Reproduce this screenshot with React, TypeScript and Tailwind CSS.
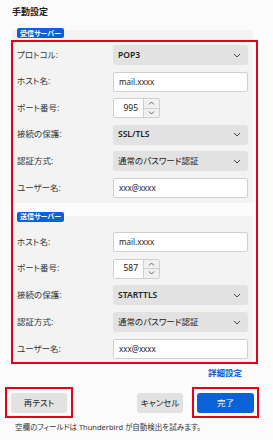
import React from "react";

const font = "font-['Noto_Sans','Noto_Sans_CJK_JP',sans-serif] [font-feature-settings:'palt']";

function Chevron() {
  return (
    <svg width="8" height="5" viewBox="0 0 8 5" className="shrink-0">
      <path d="M1 1 L4 4 L7 1" fill="none" stroke="#444" strokeWidth="1" />
    </svg>
  );
}

function Select({ value, bold = true }: { value: string; bold?: boolean }) {
  return (
    <div className="flex h-[20px] w-[135px] items-center justify-between rounded-[3px] bg-[#e2e2e2] pl-[5px] pr-[7px]">
      <span className={bold ? "text-[8.5px] font-semibold text-[#222]" : "text-[8.5px] text-[#222]"}>{value}</span>
      <Chevron />
    </div>
  );
}

function Input({ value }: { value: string }) {
  return (
    <div className="flex h-[20px] w-[135px] items-center rounded-[2px] border border-[#cfcfcf] bg-white pl-[5px] text-[8px] text-[#222]">
      {value}
    </div>
  );
}

function Port({ value }: { value: string }) {
  return (
    <div className="flex h-[20px] w-[47px] rounded-[2px] border border-[#cfcfcf] bg-white">
      <div className="flex flex-1 items-center justify-end pr-[5px] text-[8.5px] text-[#222]">{value}</div>
      <div className="flex w-[16px] flex-col border-l border-[#cfcfcf] bg-[#f0f0f0]">
        <div className="flex flex-1 items-center justify-center border-b border-[#cfcfcf]">
          <svg width="7" height="4" viewBox="0 0 7 4">
            <path d="M1 3.5 L3.5 1 L6 3.5" fill="none" stroke="#555" strokeWidth="0.9" />
          </svg>
        </div>
        <div className="flex flex-1 items-center justify-center">
          <svg width="7" height="4" viewBox="0 0 7 4">
            <path d="M1 0.5 L3.5 3 L6 0.5" fill="none" stroke="#555" strokeWidth="0.9" />
          </svg>
        </div>
      </div>
    </div>
  );
}

function Row({ label, children }: { label: string; children: React.ReactNode }) {
  return (
    <div className="flex h-[20px] items-center">
      <span className="w-[96px] text-[8.5px] text-[#333]">{label}</span>
      {children}
    </div>
  );
}

function Badge({ text }: { text: string }) {
  return (
    <div className="relative z-10 ml-[5px] flex h-[10px] w-fit items-center rounded-[2px] bg-[#0a62d6] px-[3px] text-[7px] font-bold leading-none text-white">
      {text}
    </div>
  );
}

export default function App() {
  return (
    <div className={`relative h-[440px] w-[273px] overflow-hidden bg-[#fbfbfb] ${font}`}>
      <div className="pl-[12px] pt-[6px] text-[9px] font-bold leading-[12px] text-[#222]">手動設定</div>

      <div className="ml-[12px] mt-[10px] w-[241px]">
        <Badge text="受信サーバー" />
        <div className="-mt-[8px] flex flex-col gap-[6.6px] bg-[#f3f3f3] pb-[5px] pl-[5px] pr-[5px] pt-[15px]">
          <Row label="プロトコル:"><Select value="POP3" /></Row>
          <Row label="ホスト名:"><Input value="mail.xxxx" /></Row>
          <Row label="ポート番号:"><Port value="995" /></Row>
          <Row label="接続の保護:"><Select value="SSL/TLS" /></Row>
          <Row label="認証方式:"><Select value="通常のパスワード認証" bold={false} /></Row>
          <Row label="ユーザー名:"><Input value="xxx@xxxx" /></Row>
        </div>

        <div className="mt-[9px]">
          <Badge text="送信サーバー" />
          <div className="-mt-[6px] flex flex-col gap-[6.75px] bg-[#f3f3f3] pb-[5px] pl-[5px] pr-[5px] pt-[16px]">
            <Row label="ホスト名:"><Input value="mail.xxxx" /></Row>
            <Row label="ポート番号:"><Port value="587" /></Row>
            <Row label="接続の保護:"><Select value="STARTTLS" /></Row>
            <Row label="認証方式:"><Select value="通常のパスワード認証" bold={false} /></Row>
            <Row label="ユーザー名:"><Input value="xxx@xxxx" /></Row>
          </div>
        </div>
      </div>

      <div className="mt-[3px] flex justify-end pr-[31px]">
        <span className="text-[8.5px] font-semibold leading-[12px] text-[#0a62d6]">詳細設定</span>
      </div>

      <div className="mt-[14px] flex items-center pl-[11px] pr-[19px]">
        <div className="flex h-[20px] w-[56px] items-center justify-center rounded-[3px] bg-[#e2e2e2] text-[8.5px] text-[#222]">
          再テスト
        </div>
        <div className="flex-1" />
        <div className="flex h-[20px] w-[46px] items-center justify-center rounded-[3px] bg-[#e2e2e2] text-[8.5px] text-[#222]">
          キャンセル
        </div>
        <div className="ml-[14px] flex h-[20px] w-[57px] items-center justify-center rounded-[3px] bg-[#0a62d6] text-[8.5px] text-white">
          完了
        </div>
      </div>

      <div className="mt-[9px] pl-[15px] text-[7.5px] leading-[10px] text-[#333]">
        空欄のフィールドは Thunderbird が自動検出を試みます。
      </div>

      <div className="pointer-events-none absolute left-[11px] top-[40px] h-[324px] w-[247px] border-2 border-[#e3001b]" />
      <div className="pointer-events-none absolute left-[5px] top-[387px] h-[31px] w-[68px] border-2 border-[#e3001b]" />
      <div className="pointer-events-none absolute left-[192px] top-[387px] h-[31px] w-[67px] border-2 border-[#e3001b]" />
    </div>
  );
}
